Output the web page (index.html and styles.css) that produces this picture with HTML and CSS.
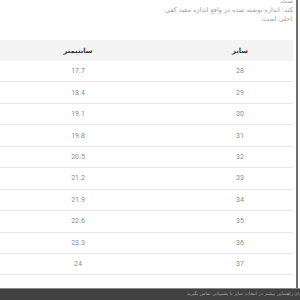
FILE: index.html
```html
<!DOCTYPE html>
<html lang="fa">
<head>
<meta charset="utf-8">
<link rel="stylesheet" href="styles.css">
</head>
<body>
<div class="page">
  <div class="viewport">
    <div class="content">
      <div class="notes">
        <p class="line">است.</p>
        <p class="line">نکته: اندازه نوشته شده در واقع اندازه مفید کفی</p>
        <p class="line">داخلی است.</p>
      </div>
      <div class="table">
        <div class="row head">
          <div class="cell cm">سانتیمتر</div>
          <div class="cell size">سایز</div>
        </div>
        <div class="row"><div class="cell cm">17.7</div><div class="cell size">28</div></div>
        <div class="row"><div class="cell cm">18.4</div><div class="cell size">29</div></div>
        <div class="row"><div class="cell cm">19.1</div><div class="cell size">30</div></div>
        <div class="row"><div class="cell cm">19.8</div><div class="cell size">31</div></div>
        <div class="row"><div class="cell cm">20.5</div><div class="cell size">32</div></div>
        <div class="row"><div class="cell cm">21.2</div><div class="cell size">33</div></div>
        <div class="row"><div class="cell cm">21.9</div><div class="cell size">34</div></div>
        <div class="row"><div class="cell cm">22.6</div><div class="cell size">35</div></div>
        <div class="row"><div class="cell cm">23.3</div><div class="cell size">36</div></div>
        <div class="row"><div class="cell cm">24</div><div class="cell size">37</div></div>
      </div>
    </div>
    <div class="rail"></div>
  </div>
  <div class="bar">
    <p class="bar-text">برای راهنمایی بیشتر در انتخاب سایز با پشتیبانی تماس بگیرید</p>
  </div>
</div>
</body>
</html>
```

FILE: styles.css
```css
html, body {
  margin: 0;
  padding: 0;
  background: #ffffff;
  overflow: hidden;
}

.page {
  width: 300px;
  height: 300px;
  display: flex;
  flex-direction: column;
}

.viewport {
  flex: 1;
  display: flex;
  min-height: 0;
}

.content {
  width: 293px;
  overflow: hidden;
}

.rail {
  width: 2px;
  margin-left: 3px;
  background: #707070;
}

.notes {
  direction: rtl;
  margin-top: -3px;
  margin-right: -2px;
  height: 43px;
  font-family: "DejaVu Sans", sans-serif;
  font-size: 6.5px;
  line-height: 9px;
  color: #a0a0a0;
}

.line {
  margin: 0;
  white-space: nowrap;
}

.table {
  display: flex;
  flex-direction: column;
}

.row {
  display: grid;
  grid-template-columns: 187px 106px;
  height: 21.45px;
  box-sizing: border-box;
  border-bottom: 1px solid #e8e8e8;
  align-items: center;
  font-family: Roboto, sans-serif;
  font-size: 7px;
  color: #8c8c8c;
}

.row.head {
  height: 21px;
  background: #f4f4f4;
  border-bottom: none;
  font-family: "DejaVu Sans", sans-serif;
  font-weight: bold;
  font-size: 6.8px;
  color: #333333;
}

.cell {
  text-align: center;
}

.cell.cm {
  padding-right: 31px;
}

.bar {
  height: 12px;
  box-sizing: border-box;
  background: #414141;
  border-top: 1px solid #8c8c8c;
  overflow: hidden;
  direction: rtl;
}

.bar-text {
  margin: 0;
  margin-right: -3px;
  white-space: nowrap;
  font-family: "DejaVu Sans", sans-serif;
  font-size: 4.6px;
  line-height: 9px;
  color: #a8a8a8;
}
```
